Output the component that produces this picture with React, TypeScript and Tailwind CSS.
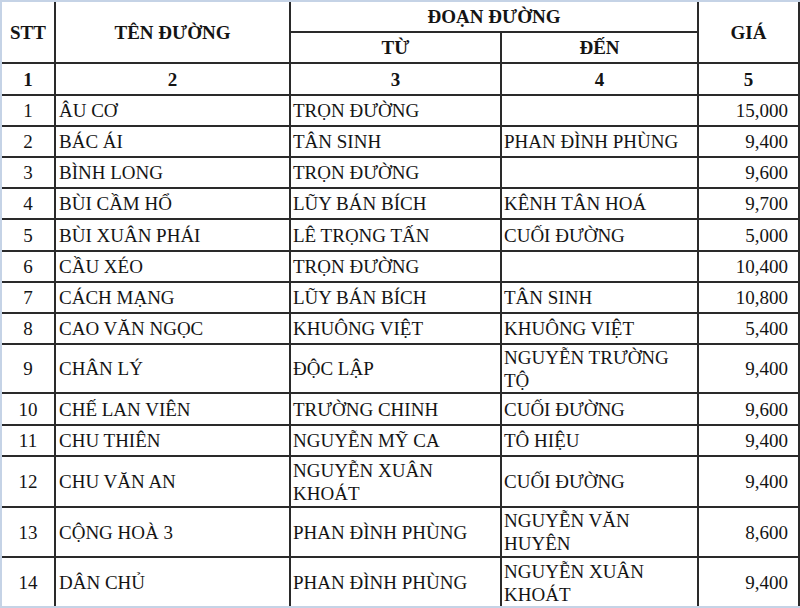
import React from "react";

type Row = {
  stt: string;
  ten: string;
  tu: string[];
  den: string[];
  gia: string;
  h: string;
  mark?: boolean;
};

const ROWS: Row[] = [
  { stt: "1", ten: "ÂU CƠ", tu: ["TRỌN ĐƯỜNG"], den: [], gia: "15,000", h: "h-[31px]" },
  { stt: "2", ten: "BÁC ÁI", tu: ["TÂN SINH"], den: ["PHAN ĐÌNH PHÙNG"], gia: "9,400", h: "h-[31px]" },
  { stt: "3", ten: "BÌNH LONG", tu: ["TRỌN ĐƯỜNG"], den: [], gia: "9,600", h: "h-[31px]" },
  { stt: "4", ten: "BÙI CẦM HỔ", tu: ["LŨY BÁN BÍCH"], den: ["KÊNH TÂN HOÁ"], gia: "9,700", h: "h-[31px]" },
  { stt: "5", ten: "BÙI XUÂN PHÁI", tu: ["LÊ TRỌNG TẤN"], den: ["CUỐI ĐƯỜNG"], gia: "5,000", h: "h-[32px]" },
  { stt: "6", ten: "CẦU XÉO", tu: ["TRỌN ĐƯỜNG"], den: [], gia: "10,400", h: "h-[31px]" },
  { stt: "7", ten: "CÁCH MẠNG", tu: ["LŨY BÁN BÍCH"], den: ["TÂN SINH"], gia: "10,800", h: "h-[31px]", mark: true },
  { stt: "8", ten: "CAO VĂN NGỌC", tu: ["KHUÔNG VIỆT"], den: ["KHUÔNG VIỆT"], gia: "5,400", h: "h-[31px]" },
  { stt: "9", ten: "CHÂN LÝ", tu: ["ĐỘC LẬP"], den: ["NGUYỄN TRƯỜNG", "TỘ"], gia: "9,400", h: "h-[49px]" },
  { stt: "10", ten: "CHẾ LAN VIÊN", tu: ["TRƯỜNG CHINH"], den: ["CUỐI ĐƯỜNG"], gia: "9,600", h: "h-[32px]" },
  { stt: "11", ten: "CHU THIÊN", tu: ["NGUYỄN MỸ CA"], den: ["TÔ HIỆU"], gia: "9,400", h: "h-[31px]" },
  { stt: "12", ten: "CHU VĂN AN", tu: ["NGUYỄN XUÂN", "KHOÁT"], den: ["CUỐI ĐƯỜNG"], gia: "9,400", h: "h-[51px]" },
  { stt: "13", ten: "CỘNG HOÀ 3", tu: ["PHAN ĐÌNH PHÙNG"], den: ["NGUYỄN VĂN", "HUYÊN"], gia: "8,600", h: "h-[50px]" },
  { stt: "14", ten: "DÂN CHỦ", tu: ["PHAN ĐÌNH PHÙNG"], den: ["NGUYỄN XUÂN", "KHOÁT"], gia: "9,400", h: "h-[51px]" },
];

const line = "border-[#2a2a2a]";

// two-line cells use a tighter leading so the row keeps its fixed height
const Lines = ({ items }: { items: string[] }) => (
  <div className={items.length > 1 ? "leading-[23px]" : ""}>
    {items.map((t, i) => (
      <div key={i}>{t}</div>
    ))}
  </div>
);

export default function App() {
  return (
    <div className="w-[800px] h-[608px] overflow-hidden bg-white border-t-2 border-b-2 border-l-2 border-[#c5d3e6] font-['Liberation_Serif','Times_New_Roman',serif] text-[19px] leading-[25px] text-[#141414]">
      <table className="table-fixed border-collapse w-[797px]">
        <colgroup>
          <col className="w-[53px]" />
          <col className="w-[235px]" />
          <col className="w-[211px]" />
          <col className="w-[197px]" />
          <col className="w-[101px]" />
        </colgroup>
        <thead className="font-bold">
          <tr className="h-[30px]">
            <th rowSpan={2} className={`border-r-2 border-b-2 ${line} text-center align-middle`}>STT</th>
            <th rowSpan={2} className={`border-r-2 border-b-2 ${line} text-center align-middle`}>TÊN ĐƯỜNG</th>
            <th colSpan={2} className={`border-r-2 border-b-2 ${line} text-center align-middle`}>ĐOẠN ĐƯỜNG</th>
            <th rowSpan={2} className={`border-r-2 border-b-2 ${line} text-center align-middle`}>GIÁ</th>
          </tr>
          <tr className="h-[31px]">
            <th className={`border-r-2 border-b-2 ${line} text-center`}>TỪ</th>
            <th className={`border-r-2 border-b-2 ${line} text-center`}>ĐẾN</th>
          </tr>
          <tr className="h-[32px]">
            {["1", "2", "3", "4", "5"].map((n) => (
              <th key={n} className={`border-r-2 border-b-2 ${line} text-center`}>{n}</th>
            ))}
          </tr>
        </thead>
        <tbody>
          {ROWS.map((r) => (
            <tr key={r.stt} className={r.h}>
              <td className={`border-r-2 border-b-2 ${line} text-center relative`}>
                {r.mark && <span className="absolute -left-[2px] top-0 bottom-0 w-[2px] bg-[#f2b65a]" />}
                {r.stt}
              </td>
              <td className={`border-r-2 border-b-2 ${line} pl-[3px] whitespace-nowrap`}>{r.ten}</td>
              <td className={`border-r-2 border-b-2 ${line} pl-[2px] whitespace-nowrap`}>
                <Lines items={r.tu} />
              </td>
              <td className={`border-r-2 border-b-2 ${line} pl-[2px] whitespace-nowrap`}>
                <Lines items={r.den} />
              </td>
              <td className={`border-r-2 border-b-2 ${line} text-right pr-[10px]`}>{r.gia}</td>
            </tr>
          ))}
        </tbody>
      </table>
    </div>
  );
}
